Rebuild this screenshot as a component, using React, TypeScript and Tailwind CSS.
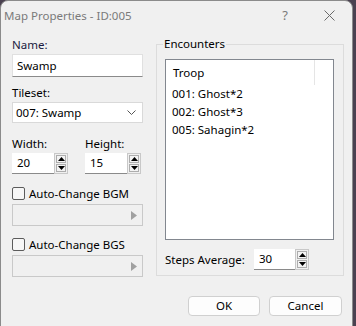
const font = { fontFamily: '"Noto Sans", "Liberation Sans", sans-serif' };

function Spinner() {
  return (
    <div className="flex h-full w-[14px] flex-col gap-px border border-[#c8c8c8] bg-[#f0f0f0] p-px">
      <div className="flex flex-1 items-center justify-center border border-[#adadad] bg-[#f3f3f3]">
        <svg width="7" height="4" viewBox="0 0 7 4">
          <path d="M0 4 L3.5 0 L7 4 Z" fill="#000" />
        </svg>
      </div>
      <div className="flex flex-1 items-center justify-center border border-[#adadad] bg-[#f3f3f3]">
        <svg width="7" height="4" viewBox="0 0 7 4">
          <path d="M0 0 L3.5 4 L7 0 Z" fill="#000" />
        </svg>
      </div>
    </div>
  );
}

function SpinField({ value, w }: { value: string; w: string }) {
  return (
    <div className="flex h-[21px]">
      <div className={`${w} flex items-center border-b border-[#8a8a8a] bg-white pl-[5px]`}>{value}</div>
      <Spinner />
    </div>
  );
}

function Check({ label }: { label: string }) {
  return (
    <div className="flex h-[15px] items-center gap-[4px]">
      <div className="h-[13px] w-[13px] rounded-[2px] border border-[#5c5c5c] bg-[#f7f7f7]" />
      <span>{label}</span>
    </div>
  );
}

function DisabledPicker() {
  return (
    <div className="flex h-[22px] w-[131px] items-center justify-end border border-[#c9c9c9] bg-[#f0f0f0] pr-[5px]">
      <svg width="6" height="9" viewBox="0 0 6 9">
        <path d="M0 0 L6 4.5 L0 9 Z" fill="#a0a0a0" />
      </svg>
    </div>
  );
}

export default function App() {
  return (
    <div className="h-[326px] w-[356px] overflow-hidden bg-[#4a4150] text-[11.5px]" style={font}>
      <div className="flex h-[330px] w-[353px] flex-col rounded-t-[8px] border border-[#8b8b8b] bg-[#f0f0f0] text-[#000]">
        {/* title bar */}
        <div className="flex h-[29px] items-center pl-[3px] text-[#7a7a7a]">
          <span>Map Properties - ID:005</span>
          <span className="ml-auto w-[46px] pl-[4px] text-center text-[13px]">?</span>
          <span className="flex w-[46px] justify-center">
            <svg width="11" height="11" viewBox="0 0 11 11">
              <path d="M0.5 0.5 L10.5 10.5 M10.5 0.5 L0.5 10.5" stroke="#6a6a6a" strokeWidth="1" />
            </svg>
          </span>
        </div>

        <div className="flex">
          {/* left column */}
          <div className="ml-[11px] mt-[7px] flex w-[131px] flex-col">
            <span className="h-[15px] leading-[15px] text-[#1a1a40]">Name:</span>
            <div className="mt-[2px] flex h-[23px] items-center border border-[#e0e0e0] border-b-[#8a8a8a] bg-white pl-[4px]">
              Swamp
            </div>
            <span className="mt-[8px] h-[15px] leading-[15px]">Tileset:</span>
            <div className="mt-[2px] flex h-[21px] items-center justify-between border border-[#d9d9d9] bg-white pl-[3px] pr-[6px]">
              <span>007: Swamp</span>
              <svg width="9" height="5" viewBox="0 0 9 5">
                <path d="M0.5 0.5 L4.5 4.5 L8.5 0.5" stroke="#555" fill="none" />
              </svg>
            </div>
            <div className="mt-[13px] flex gap-[17px]">
              <div className="flex flex-col gap-[2px]">
                <span className="h-[15px] leading-[15px]">Width:</span>
                <SpinField value="20" w="w-[42px]" />
              </div>
              <div className="flex flex-col gap-[2px]">
                <span className="h-[15px] leading-[15px]">Height:</span>
                <SpinField value="15" w="w-[42px]" />
              </div>
            </div>
            <div className="mt-[12px]">
              <Check label="Auto-Change BGM" />
            </div>
            <div className="mt-[3px]">
              <DisabledPicker />
            </div>
            <div className="mt-[11px]">
              <Check label="Auto-Change BGS" />
            </div>
            <div className="mt-[3px]">
              <DisabledPicker />
            </div>
          </div>

          {/* encounters group */}
          <div className="relative ml-[13px] mt-[14px] h-[232px] w-[188px] border border-[#dcdcdc]">
            <span className="absolute left-[6px] top-[-9px] bg-[#f0f0f0] px-[1px] leading-[15px]">Encounters</span>
            <div className="ml-[8px] mt-[14px] flex h-[181px] w-[169px] flex-col border border-[#82878f] bg-white">
              <div className="flex h-[25px]">
                <span className="flex w-[148px] items-center pl-[7px]">Troop</span>
                <div className="h-full w-px bg-[#e5e5e5]" />
              </div>
              <div className="flex flex-col pl-[6px] leading-[18px]">
                <span>001: Ghost*2</span>
                <span>002: Ghost*3</span>
                <span>005: Sahagin*2</span>
              </div>
            </div>
            <div className="ml-[8px] mt-[9px] flex items-center">
              <span className="w-[89px]">Steps Average:</span>
              <SpinField value="30" w="w-[41px]" />
            </div>
          </div>
        </div>

        {/* buttons */}
        <div className="mt-[19px] flex justify-end gap-[9px] pr-[10px]">
          <button className="h-[20px] w-[72px] rounded-[4px] border border-[#d0d0d0] bg-[#fdfdfd]">OK</button>
          <button className="h-[20px] w-[73px] rounded-[4px] border border-[#d0d0d0] bg-[#fdfdfd]">Cancel</button>
        </div>
      </div>
    </div>
  );
}
